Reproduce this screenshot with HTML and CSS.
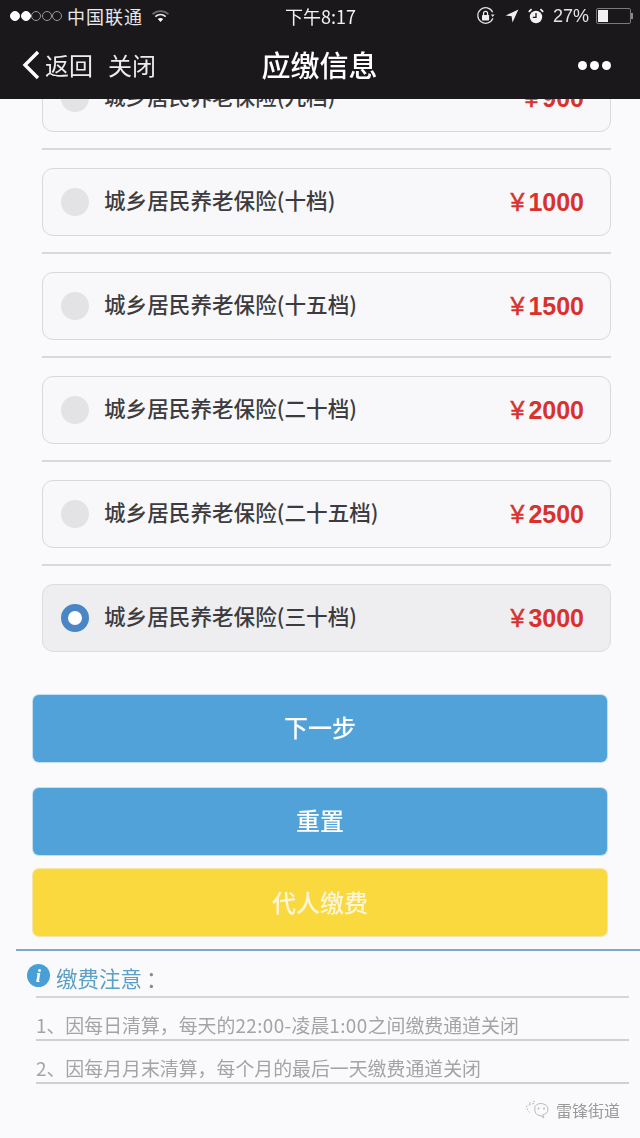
FILE: index.html
```html
<!DOCTYPE html>
<html lang="zh-CN">
<head>
<meta charset="utf-8">
<title>应缴信息</title>
<link rel="stylesheet" href="styles.css">
</head>
<body>
<div class="screen">
  <header class="topbar">
    <div class="status">
      <div class="status-left">
        <span class="signal"><i class="on"></i><i class="on"></i><i></i><i></i><i></i></span>
        <span class="carrier">中国联通</span>
        <svg class="wifi" width="19" height="14" viewBox="0 0 18 14"><path d="M1 5.200C5.600 1 12.400 1 17 5.200" fill="none" stroke="#6e6e6e" stroke-width="1.800"/><path d="M3.800 7.600C6.900 5 11.100 5 14.200 7.600" fill="none" stroke="#e8e8e8" stroke-width="1.800"/><path d="M6.300 10c1.600-1.300 3.800-1.300 5.400 0L9 13z" fill="#fff"/></svg>
      </div>
      <span class="clock">下午8:17</span>
      <div class="status-right">
        <svg class="lock" width="20" height="20" viewBox="0 0 18 18"><path d="M15.200 11A7 7 0 1 1 15 5.600" fill="none" stroke="#e4e4e4" stroke-width="1.100"/><path d="M13.400 7.600h3.400L15 10z" fill="#e4e4e4"/><rect x="5.400" y="8" width="6.400" height="5" rx=".6" fill="#eee"/><path d="M6.800 8V6.600a1.800 1.800 0 0 1 3.600 0V8" fill="none" stroke="#eee" stroke-width="1.100"/></svg>
        <svg class="arrow" width="14" height="14" viewBox="0 0 14 14"><path d="M13.400.6L.6 6.400l6 .8.9 6.200z" fill="#f0f0f0"/></svg>
        <svg class="alarm" width="16" height="16" viewBox="0 0 16 16"><circle cx="8" cy="9" r="6.200" fill="#f2f2f2"/><path d="M8 5v4.400H4.800" fill="none" stroke="#1a181b" stroke-width="1.300"/><path d="M.8 3.800L3.600 1.200M15.200 3.800L12.400 1.200" stroke="#f2f2f2" stroke-width="1.800"/></svg>
        <span class="pct">27%</span>
        <span class="battery"><i></i></span>
      </div>
    </div>
    <nav class="navbar">
      <div class="nav-left">
        <svg class="back" width="20" height="30" viewBox="0 0 20 30"><path d="M17 2L4 15l13 13" fill="none" stroke="#fff" stroke-width="3.400"/></svg>
        <span class="nav-link">返回</span>
        <span class="nav-link close">关闭</span>
      </div>
      <h1 class="nav-title">应缴信息</h1>
      <div class="more"><i></i><i></i><i></i></div>
    </nav>
  </header>

  <main class="content">
    <ul class="options">
      <li class="option"><span class="radio"></span><span class="name">城乡居民养老保险(九档)</span><span class="price"><span class="yen">¥</span>900</span></li>
      <li class="option"><span class="radio"></span><span class="name">城乡居民养老保险(十档)</span><span class="price"><span class="yen">¥</span>1000</span></li>
      <li class="option"><span class="radio"></span><span class="name">城乡居民养老保险(十五档)</span><span class="price"><span class="yen">¥</span>1500</span></li>
      <li class="option"><span class="radio"></span><span class="name">城乡居民养老保险(二十档)</span><span class="price"><span class="yen">¥</span>2000</span></li>
      <li class="option"><span class="radio"></span><span class="name">城乡居民养老保险(二十五档)</span><span class="price"><span class="yen">¥</span>2500</span></li>
      <li class="option selected"><span class="radio"></span><span class="name">城乡居民养老保险(三十档)</span><span class="price"><span class="yen">¥</span>3000</span></li>
    </ul>

    <div class="actions">
      <button class="btn btn-blue btn-next">下一步</button>
      <button class="btn btn-blue btn-reset">重置</button>
      <button class="btn btn-yellow">代人缴费</button>
    </div>

    <section class="notice">
      <div class="notice-head">
        <span class="info-icon">i</span>
        <h2 class="notice-title">缴费注意<span class="colon">：</span></h2>
      </div>
      <p class="notice-row">1、因每日清算，每天的<span class="digits">22:00-</span>凌晨<span class="digits">1:00</span>之间缴费通道关闭</p>
      <p class="notice-row">2、因每月月末清算，每个月的最后一天缴费通道关闭</p>
    </section>

    <div class="watermark">
      <svg width="26" height="22" viewBox="0 0 26 20"><g fill="none" stroke="#b5b5b5" stroke-width="1"><path d="M10 6.500a7 6 0 0 1 13 3c0 3-2.500 5-5.500 5.500l1.500 3-4-2.600c-3.500 0-6-2.600-5-8.900z"/><path d="M9 3.500C6.500 4 3 5 1 7l3.500 5.500" stroke-dasharray="2 1.500"/></g><circle cx="13.500" cy="8.500" r=".9" fill="#b5b5b5"/><circle cx="19" cy="8.500" r=".9" fill="#b5b5b5"/><circle cx="9" cy="1.500" r=".8" fill="#b5b5b5"/><circle cx="5" cy="3" r=".8" fill="#b5b5b5"/></svg>
      <span>雷锋街道</span>
    </div>
  </main>
</div>
</body>
</html>
```

FILE: styles.css
```css
* { box-sizing: border-box; }
html, body { margin: 0; padding: 0; }
body {
  width: 640px;
  height: 1138px;
  overflow: hidden;
  background: #fafafc;
  font-family: "Liberation Sans", "Noto Sans CJK SC", sans-serif;
}
.screen { position: relative; width: 640px; height: 1138px; overflow: hidden; filter: blur(0.4px); }

/* top bar overlays the scrolled content */
.topbar {
  position: absolute;
  top: 0; left: 0; right: 0;
  height: 99px;
  background: #1a181b;
  color: #fff;
  z-index: 2;
}
.status {
  height: 31px;
  padding: 0 9px 0 10px;
  display: grid;
  grid-template-columns: 1fr auto 1fr;
  align-items: center;
  font-family: "Noto Sans CJK SC", sans-serif;
  color: #e8e8e8;
}
.status-left { display: flex; align-items: center; }
.signal { display: flex; gap: .5px; margin-right: 5px; }
.signal i {
  width: 10px; height: 10px;
  border-radius: 50%;
  border: 1px solid #9a9a9a;
}
.signal i.on { background: #fff; border-color: #fff; }
.carrier { font-size: 18px; line-height: 24px; letter-spacing: 1px; }
.wifi { margin-left: 8px; }
.clock { font-size: 18px; line-height: 24px; color: #f2f2f2; }
.status-right { display: flex; align-items: center; justify-content: flex-end; }
.lock { margin-right: 9px; }
.arrow { margin-right: 9px; }
.alarm { margin-right: 9px; }
.pct { font-family: "Liberation Sans", sans-serif; font-size: 18px; margin: 2px 7px 0 0; color: #e4e4e4; }
.battery {
  position: relative;
  display: block;
  width: 35px; height: 16px;
  border: 1px solid #7a7a7a;
  border-radius: 2px;
  padding: 1px;
}
.battery::after {
  content: "";
  position: absolute;
  right: -3px; top: 4px;
  width: 2px; height: 6px;
  background: #8a8a8a;
}
.battery i { display: block; width: 10px; height: 100%; background: #f2f2f2; }

.navbar {
  position: relative;
  height: 67px;
  display: flex;
  align-items: center;
  justify-content: space-between;
  padding: 0 29px 0 21px;
}
.nav-left { display: flex; align-items: center; }
.back { margin-right: 4px; }
.nav-link { font-family: "Noto Sans CJK SC", sans-serif; font-size: 24px; line-height: 32px; color: #ececec; }
.close { margin-left: 15px; }
.nav-title {
  position: absolute;
  left: -1px; right: 0; top: 16px;
  margin: 0;
  text-align: center;
  font-family: "Noto Sans CJK SC", sans-serif;
  font-size: 29px;
  line-height: 34px;
  font-weight: 500;
  color: #fff;
  pointer-events: none;
}
.more { display: flex; gap: 3px; margin-top: 2px; }
.more i { width: 9px; height: 9px; border-radius: 50%; background: #fff; }

/* scrolled content */
.content { padding-top: 64px; }
.options { list-style: none; margin: 0; padding: 0 29px 0 42px; }
.option {
  display: flex;
  align-items: center;
  height: 68px;
  padding: 0 26px 0 18px;
  background: #f8f8fa;
  border: 1px solid #d8d8db;
  border-radius: 11px;
  position: relative;
  margin-bottom: 36px;
}
.option::after {
  content: "";
  position: absolute;
  left: -1px; right: -1px;
  bottom: -19px;
  height: 2px;
  background: #d9d9db;
}
.option:last-child { margin-bottom: 0; }
.option:last-child::after { display: none; }
.option.selected { background: #eeeef0; border-color: #dcdcde; }
.radio {
  flex: none;
  width: 28px; height: 28px;
  border-radius: 50%;
  background: #e3e3e5;
  margin-right: 16px;
}
.selected .radio {
  background: #fff;
  border: 7px solid #4a86c6;
}
.name {
  flex: 1;
  font-family: "Noto Sans CJK SC", sans-serif;
  font-size: 21.600px;
  font-weight: 500;
  line-height: 26px;
  color: #3c3c40;
  margin-top: -5px;
  margin-left: -1px;
  white-space: nowrap;
}
.price {
  font-family: "Liberation Sans", "Noto Sans CJK SC", sans-serif;
  font-size: 25px;
  font-weight: 700;
  color: #d9322e;
}
.yen { font-weight: 400; margin-right: 4px; -webkit-text-stroke: .5px #d9322e; }

.actions { padding: 43px 33px 0; display: flex; flex-direction: column; }
.btn {
  display: block;
  width: 100%;
  height: 67px;
  border: 0;
  border-radius: 6px;
  font-family: "Noto Sans CJK SC", sans-serif;
  font-size: 24px;
  font-weight: 500;
  color: #fff;
  padding: 0 0 4px;
}
.btn-blue { background: #51a2d8; box-shadow: 0 0 0 1px #c3dff0; }
.btn-yellow { background: #fad93f; box-shadow: 0 0 0 1px #f3e6a8; color: #fdf6d8; padding-bottom: 2px; margin-top: 14px; }
.btn-reset { margin-top: 26px; }

.notice {
  margin: 13px 0 0 16px;
  border-top: 2px solid #7fa9c8;
}
.notice-head {
  position: relative;
  margin-left: 20px;
  margin-right: 11px;
  height: 47px;
  border-bottom: 2px solid #d5d5d7;
  padding-left: 20px;
  display: flex;
  align-items: center;
}
.info-icon {
  position: absolute;
  left: -9px; top: 13px;
  width: 23px; height: 23px;
  border-radius: 50%;
  background: #479fd6;
  color: #fff;
  font-family: "Liberation Serif", serif;
  font-style: italic;
  font-weight: 700;
  font-size: 19px;
  line-height: 23px;
  text-align: center;
}
.notice-title {
  margin: 9px 0 0;
  font-family: "Noto Sans CJK SC", sans-serif;
  font-size: 21.500px;
  font-weight: 400;
  line-height: 30px;
  color: #5c9fc4;
}
.colon { color: #8a8a8a; margin-left: 4px; }
.notice-row {
  margin: 0 11px 0 20px;
  height: 43px;
  border-bottom: 2px solid #d0d0d2;
  font-family: "Noto Sans CJK SC", sans-serif;
  font-size: 18.900px;
  line-height: 53px;
  color: #a4a4a6;
  white-space: nowrap;
}
.digits { letter-spacing: .4px; }

.watermark {
  display: flex;
  align-items: center;
  justify-content: flex-end;
  gap: 5px;
  padding: 14px 20px 0 0;
  font-family: "Noto Sans CJK SC", sans-serif;
  font-size: 16px;
  line-height: 24px;
  color: #9a9a9a;
}
```
